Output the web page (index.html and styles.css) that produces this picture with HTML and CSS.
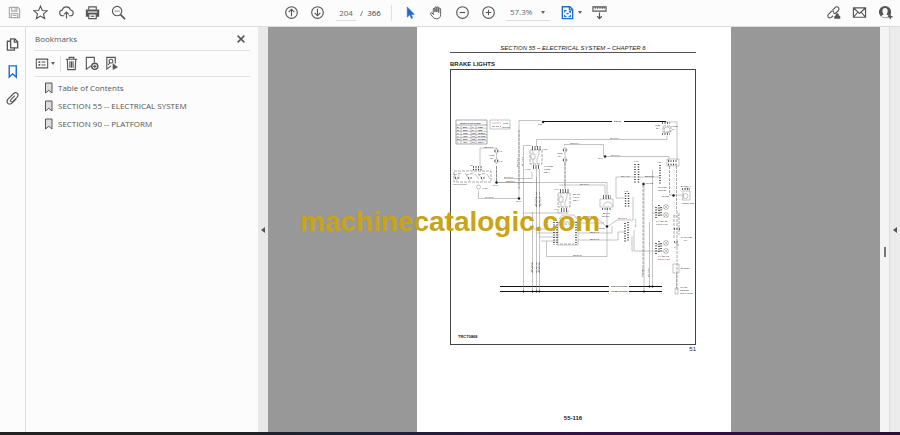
FILE: index.html
```
<!DOCTYPE html>
<html lang="en">
<head>
  <meta charset="UTF-8">
  <meta name="viewport" content="width=device-width, initial-scale=1.0">
  <title>Bookmarks</title>
  <link rel="stylesheet" href="styles.css">
</head>
<body>

  <header class="toolbar">
    <div class="tools">
      <button class="tool faded" aria-label="Save"><svg viewBox="0 0 16 16"><path d="M2.500 2.500h9l2 2v9h-11zM5 2.500v4h5.500v-4M8.500 3.500v2M4.500 13.500v-4.500h7v4.500M6 11h4"/></svg></button>
      <button class="tool" aria-label="Star"><svg viewBox="0 0 16 16"><path d="M8 1.200l2 4.600 5 .4-3.800 3.300 1.200 4.900L8 11.800l-4.400 2.600 1.200-4.900L1 6.200l5-.4z"/></svg></button>
      <button class="tool" aria-label="Upload"><svg viewBox="0 0 16 16"><path d="M5.500 11.500H4a3 3 0 0 1-.5-6 4.500 4.500 0 0 1 8.700-.2A3.100 3.100 0 0 1 12 11.500h-1.500M8 14.500V7.500M5.500 10L8 7.500l2.500 2.500"/></svg></button>
      <button class="tool" aria-label="Print"><svg viewBox="0 0 16 16"><path d="M4 5V2h8v3"/><path class="solid" d="M1.500 5.500h13v6.500h-13z"/><path class="paper" d="M4 9.500h8v5H4z"/><path d="M6 12h4"/><path class="light" d="M3 7.500h10"/></svg></button>
      <button class="tool" aria-label="Search"><svg viewBox="0 0 16 16"><circle cx="6.500" cy="6.500" r="5"/><path d="M10.200 10.200l4.800 4.800" stroke-width="1.800"/><path d="M4 6.500h1M6 6.500h1M8 6.500h1"/></svg></button>
    </div>

    <div class="tools page-tools">
      <button class="tool" aria-label="Previous page"><svg viewBox="0 0 16 16"><circle cx="8" cy="8" r="6.200"/><path d="M8 12V4.500M5 7.500l3-3 3 3"/></svg></button>
      <button class="tool" aria-label="Next page"><svg viewBox="0 0 16 16"><circle cx="8" cy="8" r="6.200"/><path d="M8 4v7.500M5 8.500l3 3 3-3"/></svg></button>
      <input class="page-number" type="text" value="204" aria-label="Page number">
      <span class="page-total">/&nbsp; 366</span>
      <span class="divider"></span>
      <button class="tool blue" aria-label="Select"><svg viewBox="0 0 16 16"><path class="solid" d="M4.500 2v11l2.700-2.500 1.800 4 1.500-.7-1.800-3.800h3.500z" stroke-width=".5"/></svg></button>
      <button class="tool" aria-label="Pan"><svg viewBox="0 0 16 16"><path d="M4.500 9.500V4q.9-1.200 1.900 0V7.500 2.500q1-1.200 2 0V7.500 2.500q1-1.200 2 0V8 4q1-1.200 2 0V10q0 4.700-4.500 4.700-2.500 0-4-2L1.300 9q.8-1.500 2-.5l1.500 1.700z" stroke-width="1"/></svg></button>
      <button class="tool" aria-label="Zoom out"><svg viewBox="0 0 16 16"><circle cx="8" cy="8" r="6.200"/><path d="M5 8h6"/></svg></button>
      <button class="tool" aria-label="Zoom in"><svg viewBox="0 0 16 16"><circle cx="8" cy="8" r="6.200"/><path d="M5 8h6M8 5v6"/></svg></button>
      <label class="zoom">
        <select aria-label="Zoom level"><option>57.3%</option></select>
        <span class="caret"></span>
      </label>
      <button class="tool blue fit" aria-label="Fit page"><svg viewBox="0 0 16 16"><path d="M2.500 1.800h8l3 3v9.700h-11z" stroke-width="1.500"/><path d="M10 2v3.200h3M5 8V6h2M9.500 7H11v1.500M5 10.500v2h2M9 12.500h2v-2M6.800 9.200h2.400"/></svg><span class="caret"></span></button>
      <button class="tool" aria-label="Scroll mode"><svg viewBox="0 0 16 16"><path d="M1 2h14v4.500H1zM3.500 2v2M6 2v2M8.500 2v2M11 2v2M13 2v2"/><path d="M8 8v6.500M5.500 12L8 14.500l2.500-2.500"/></svg></button>
    </div>

    <div class="tools">
      <button class="tool" aria-label="Share link"><svg viewBox="0 0 16 16"><path d="M7 5.500l3-3q2-1.300 3.300.2t0 3.200L10.500 8.500q-1.600 1-2.800-.3M8.500 7q-1.500-1.200-3 0L2.500 10q-1.300 1.600 0 3t3.200.2L7.500 11.500"/><path class="solid" d="M9 14.300v-1.500q.2-1.300 1.600-1.600-.4-2.200 1.400-2.200t1.400 2.200q1.500.3 1.600 1.600v1.500z" stroke-width=".5"/></svg></button>
      <button class="tool" aria-label="Mail"><svg viewBox="0 0 16 16"><path d="M1.500 3h13v10h-13zM2 3.500l6 5.500 6-5.500M2 12.500l4-4.500M14 12.500l-4-4.500"/></svg></button>
      <button class="tool" aria-label="Account"><svg viewBox="0 0 16 16"><circle class="solid" cx="7.500" cy="7.500" r="5.900"/><path class="paper" stroke="none" d="M3.500 12.300q.2-1.800 2.600-2.300Q4.700 9 4.700 6.300 4.900 3.300 7.500 3.300t2.800 3q0 2.700-1.400 3.700 2.400.5 2.600 2.300-2 1.200-4 1.200t-4-1.200z"/><path d="M10.500 12.500h5M13 10v5" stroke-width="1.500"/></svg></button>
    </div>
  </header>

  <main class="workspace">
    <nav class="rail">
      <button class="tool" aria-label="Pages"><svg viewBox="0 0 16 16"><path d="M6 2h4.500l3 3v6.500H6zM10 2v3.500h3.500M6 4.500H2.500v9.500h7.500v-2.500" stroke-width="1.400"/></svg></button>
      <button class="tool blue" aria-label="Bookmarks"><svg viewBox="0 0 16 16"><path d="M4.500 2h7.500v12l-3.800-3.500L4.500 14z" stroke-width="1.500"/></svg></button>
      <button class="tool" aria-label="Attachments"><svg viewBox="0 0 16 16"><path d="M10.500 5L6.500 9q-1.200 1.500-.2 2.300t2.200-.3L13 6.500q1.800-2.300.2-4-2-1.500-4 .2L3.200 8.700q-2 2.500-.2 4.500 2.200 1.700 4.500-.2L12 8.500"/></svg></button>
    </nav>

    <section class="panel">
      <div class="panel-title">
        <h1>Bookmarks</h1>
        <button class="close" aria-label="Close"><svg viewBox="0 0 16 16"><path d="M3.500 3.500l9 9M12.500 3.500l-9 9" stroke-width="2"/></svg></button>
      </div>
      <div class="panel-tools">
        <button class="tool options" aria-label="Options"><svg viewBox="0 0 16 16"><path d="M1.500 3h13v10h-13zM7.500 6.300H12M7.500 9.700H12"/><path d="M4 6.300h2M4 9.700h2" stroke-width="2"/></svg><span class="caret"></span></button>
        <span class="divider"></span>
        <button class="tool" aria-label="Delete"><svg viewBox="0 0 16 16"><path d="M2 3.500h12M5.500 3.500v-2h5v2M3.500 3.500l.5 11h8l.5-11M6.300 5.500v7M8 5.500v7M9.700 5.500v7"/></svg></button>
        <button class="tool" aria-label="New bookmark"><svg viewBox="0 0 16 16"><path d="M7.500 10.500L2.500 14V1.500h8.500V7"/><circle cx="11.500" cy="11" r="3.300" stroke-width="1.500"/><path d="M9.700 11h3.600M11.500 9.200v3.600"/></svg></button>
        <button class="tool" aria-label="Find bookmark"><svg viewBox="0 0 16 16"><path d="M7.500 10.500L3 14V1.500h9V8"/><circle cx="7.500" cy="5.500" r="2"/><path d="M6 7.500l-1.500 2"/><path class="solid" d="M9.500 8v6.500l5-2.500z" stroke-width=".5"/></svg></button>
      </div>
      <ul class="bookmarks">
        <li><a href="#page"><svg viewBox="0 0 10 12"><path d="M1.500 1h6.500v10L4.800 8.300 1.500 11z"/></svg>Table of Contents</a></li>
        <li><a href="#page"><svg viewBox="0 0 10 12"><path d="M1.500 1h6.500v10L4.800 8.300 1.500 11z"/></svg>SECTION 55 -- ELECTRICAL SYSTEM</a></li>
        <li><a href="#page"><svg viewBox="0 0 10 12"><path d="M1.500 1h6.500v10L4.800 8.300 1.500 11z"/></svg>SECTION 90 -- PLATFORM</a></li>
      </ul>
    </section>

    <button class="splitter" aria-label="Collapse panel"><span class="arrow"></span></button>

    <div class="viewer">
      <article class="page" id="page">
        <h2>SECTION 55 – ELECTRICAL SYSTEM – CHAPTER 6</h2>
        <h3>BRAKE LIGHTS</h3>
        <figure>
          <svg class="diagram" viewBox="451 70 244 274" role="img" aria-label="Brake lights wiring diagram">
            <defs>
              <g id="fuse"><path d="M0 -8V8"/><circle cy="-5" r="2" class="blank"/><circle cy="5" r="2" class="blank"/><path class="pins" d="M-2 -5h4M-2 5h4"/></g>
              <g id="relay"><path class="dash" d="M-6 -7H6V7H-6z"/><path d="M-3 -7v4h-2v5h4v-5h-2M3 -7v4l-2 5v5M-3 2v5"/><path class="pins" d="M-4 -10h9M-4 -8h9M-3 9h7M-3 11h7"/></g>
              <g id="lamp"><path class="pins" d="M-7 -5v12M-4 -7v12M-2 -5v9"/><circle cx="3" cy="-5" r="2.500"/><circle cx="3" cy="3" r="2.500"/><path d="M1 -7l4 4M5 -7l-4 4M1 1l4 4M5 1L1 5M-7 -3H0M-7 3H0"/></g>
            </defs>

            <!-- wire colour table and legend -->
            <path class="thick" d="M456 120h31v24h-31zM456 125h31"/>
            <path d="M461 125v19M471 125v19M476 125v19M456 128.200h31M456 131.300h31M456 134.500h31M456 137.600h31M456 140.800h31M490 120h20v9h-20zM492 123h9"/>
            <path class="dash" d="M492 126.500h9"/>
            <g class="labels strong">
              <text x="460" y="123.500">WIRE COLOR CODES</text>
              <text x="457" y="127.500">B</text><text x="463" y="127.500">BLK</text><text x="472" y="127.500">P</text><text x="478" y="127.500">PINK</text>
              <text x="457" y="130.600">W</text><text x="463" y="130.600">WHT</text><text x="472" y="130.600">R</text><text x="478" y="130.600">RED</text>
              <text x="457" y="133.800">G</text><text x="463" y="133.800">GRN</text><text x="472" y="133.800">LB</text><text x="478" y="133.800">LT BLU</text>
              <text x="457" y="137">O</text><text x="463" y="137">ORG</text><text x="472" y="137">LG</text><text x="478" y="137">LT GRN</text>
              <text x="457" y="140.100">BR</text><text x="463" y="140.100">BRN</text><text x="472" y="140.100">DB</text><text x="478" y="140.100">DK BLU</text>
              <text x="457" y="143.300">Y</text><text x="463" y="143.300">YEL</text><text x="472" y="143.300">GY</text><text x="478" y="143.300">GRAY</text>
            </g>

            <!-- power and ground rails -->
            <path class="rail-line" d="M543 121.500h69M624 121.500h42M500 286.500h109M629 286.500h33M500 291.500h109M629 291.500h33"/>

            <!-- supply and left side wiring -->
            <path d="M519 198.500V120.500h22M519 198.500H478.500v-8M480 166V148h16.500v4M496.500 166v16.500h36M504 178.500h28V172M523.500 291V145.500h8M496.500 182.500H607V197M536.500 147V139.500H667v-4M564.500 146V144.500h39v11.500M605 156.500h64V162M666 122h11v38M565 162v27"/>
            <path class="dash" d="M519 130v60M565 163v25M496.500 166v16"/>
            <path class="dash" d="M454 171h37v11h-37zM454 175l8-2M466 175l8-2M478 175l8-2"/>
            <path d="M457 181l-3-7M459 175v4M470 181l-5-8M475 174l4 5M483 181l-5-8M487 174l3 5"/>
            <circle cx="478.500" cy="187" r="2"/>
            <path class="pins" d="M473 167h9M473 169.500h9M455 178h4M468 178h4M481 178h5"/>
            <use href="#fuse" x="496.500" y="156"/>
            <use href="#fuse" x="565" y="155"/>
            <use href="#relay" x="536" y="157"/>
            <use href="#relay" x="564" y="200"/>

            <!-- vertical harness drops -->
            <path d="M532.500 212v79M536.500 169v122M539.500 169v122M523 213h38M536.500 177v30"/>
            <path class="dash" d="M532.500 262v12M536.500 262v12M539.500 262v12M536.500 192v15M539.500 192v15"/>

            <!-- control module -->
            <path d="M558 222h20v23h-20zM558 213v-3M568 213v-3M558 213h10M559 219l3-4h12l3 4M546.500 241v15.500H607V228M578 233h34v-7M578 240h40v-8h7M537 233h21M539 237h19M532 229h26M578 223h26M541 241h17"/>
            <path class="pins" d="M554 222v23M557 222v23M576 222v23"/>
            <path class="dash" d="M560 224h14M560 244h14"/>

            <!-- brake switch -->
            <path d="M600 199h13v8h-13zM603 206l3-4h4l3 4M607 207v20M607 227l10-7h16V197M559 185h46v10M607 227l-10-9h-18"/>
            <path class="pins" d="M603 196h8M603 198h8M602 209h9"/>

            <!-- connectors -->
            <path class="pins" d="M635 164v20M638.500 164v20M660 165v20M625.500 193v14M628.500 193v14M625 223v20M628 222v20M668 161h10M668 164.500h10M662 123h8M662 134h8"/>
            <path d="M667 159h12v7h-12zM635 177h-19v21h8M638 177h22M644 184v107M649.500 286V222M652.500 286V170M652.500 213h8M634 230v21h25M633 251h-1v-15"/>
            <path class="dash" d="M663 126h8v6h-8zM669.500 166v29M676.500 166v45M643 185v90"/>
            <circle cx="667" cy="130" r="3"/>

            <!-- brake light and ground leg -->
            <path d="M669.500 195h7M677 195h6M683 191h7v9h-8l1-3zM685 190v-2h4v2"/>
            <circle cx="685.500" cy="196" r="2.500"/>
            <path class="dash" d="M677 211v80M674 215v24M679 213v22"/>
            <path class="pins" d="M682 189h8M674 229h6M674 242h5"/>
            <path d="M674 215q3 3 5 0M674 242l5 3-5 3M673 264h6v9h-6zM676.500 273v15M675 288h3v6h-3z"/>
            <use href="#lamp" x="663" y="212"/>
            <use href="#lamp" x="663" y="248"/>

            <g class="dots">
              <circle cx="519" cy="198.500" r="1"/><circle cx="496.500" cy="182.500" r="1"/><circle cx="605" cy="156.500" r="1"/><circle cx="643.500" cy="184" r="1"/><circle cx="607" cy="226.500" r="1"/><circle cx="673.500" cy="195.500" r="1"/><circle cx="543" cy="122" r="1"/>
              <circle cx="523.500" cy="291.500" r=".8"/><circle cx="532.500" cy="291.500" r=".8"/><circle cx="536.500" cy="291.500" r=".8"/><circle cx="539.500" cy="291.500" r=".8"/><circle cx="644" cy="291.500" r=".8"/><circle cx="649.500" cy="286.500" r=".8"/><circle cx="652.500" cy="286.500" r=".8"/>
            </g>

            <g class="labels strong">
              <text x="614" y="122.300">B BATT</text>
              <text x="611" y="287.300">CLEAN GROUND</text>
              <text x="611" y="292.300">FRAME GROUND</text>
            </g>
            <g class="labels">
              <text x="503" y="124">WIRE</text><text x="502" y="127.500">OPTION</text>
              <text x="538" y="125">S-31</text>
              <text x="484" y="147.500">982 R-1.0</text>
              <text x="489" y="156">FUSE</text><text x="490" y="159">15A</text>
              <text x="499" y="152">X-5</text><text x="499" y="162">X-5</text>
              <text x="453" y="185">LIGHT SWITCH</text>
              <text x="482" y="189">X-036</text><text x="470" y="166">C1</text>
              <text x="485" y="198">794 B-1.0</text>
              <text x="493" y="186">SP-04</text><text x="516" y="202">SP-1A</text>
              <text x="504" y="178">103 O-0.8</text><text x="506" y="182">982 B-1.0</text>
              <text x="542" y="150">X-010</text><text x="525" y="170">X-010</text>
              <text x="544" y="167">FLASHER</text><text x="544" y="170">TIMER</text><text x="544" y="173">RELAY</text>
              <text x="557" y="154">FUSE</text><text x="558" y="157">10A</text>
              <text x="570" y="144">982 R-1.0</text><text x="610" y="139">870 R-1.0</text>
              <text x="598" y="159">SP-2</text><text x="611" y="156">870 R-1.0</text>
              <text x="580" y="185">810 R-1.0</text>
              <text x="573" y="195">BRAKE</text><text x="573" y="198">LIGHT</text><text x="573" y="201">RELAY</text>
              <text x="554" y="190">X-044</text><text x="554" y="210">X-044</text>
              <text x="603" y="214">BRAKE</text><text x="602" y="217">SWITCH</text>
              <text x="583" y="217">812 R-0.8</text><text x="590" y="232.500">855 R-0.8</text><text x="590" y="239.500">856 R-0.8</text><text x="573" y="256">892 B-0.8</text>
              <text x="618" y="219">890 R-1.0</text><text x="599" y="229">SP-25</text>
              <text x="655" y="126">FUSE</text><text x="656" y="129">20A</text><text x="672" y="127">FUSE</text><text x="672" y="130">10A</text>
              <text x="634" y="162">X-19</text><text x="657" y="163">X-20</text><text x="621" y="176.500">810 Y-0.8</text><text x="645" y="176.500">815 B-0.8</text><text x="646" y="184">SPLICE</text>
              <text x="658" y="188">TRAILER</text><text x="658" y="191">SOCKET</text><text x="624" y="192">X-15</text>
              <text x="681" y="187">BK-RELAY</text><text x="681" y="204">ALTERNATOR</text><text x="662" y="197">SPLICE</text>
              <text x="656" y="222">R.H. BRAKE</text><text x="656" y="225">LIGHT LAMP</text>
              <text x="658" y="257">L.H. BRAKE</text><text x="658" y="260">LIGHT LAMP</text>
              <text x="681" y="238">MAIN FUSE</text><text x="684" y="241">60A</text><text x="681" y="269">BATTERY</text>
              <text x="680" y="288">FRAME</text><text x="680" y="291">GROUND</text><text x="680" y="294">STRAP STUD</text>
              <g transform="rotate(-90)">
                <text x="-167" y="518">888 R-1.0</text><text x="-166" y="523">894 R-0.8</text><text x="-206" y="536">871 R-1.0</text><text x="-206" y="541">832 R-1.0</text>
                <text x="-272" y="532">801 B-1.0</text><text x="-272" y="538.500">802 B-1.0</text><text x="-227" y="636">812 Y-0.8</text><text x="-277" y="643">870 B-0.8</text><text x="-277" y="649">871 B-0.8</text>
              </g>
            </g>
            <text class="drawing-number" x="458" y="338">TRCT0868</text>
          </svg>
          <figcaption>51</figcaption>
        </figure>
        <footer>55-116</footer>
      </article>
    </div>

    <div class="scrollbar"><span class="thumb"></span></div>
    <button class="side" aria-label="Expand tools"><span class="arrow"></span></button>
  </main>

  <div class="taskbar"></div>
  <div class="watermark">machinecatalogic.com</div>

</body>
</html>
```
FILE: styles.css
```
* {
  box-sizing: border-box;
}

body {
  font-family: 'Open Sans', 'Noto Sans', sans-serif;
  font-size: 8px;
  line-height: 12px;
  color: #555;
  background-color: #fcfcfc;
  display: flex;
  flex-direction: column;
  height: 100vh;
  margin: 0;
  overflow: hidden;
}

button {
  border: none;
  padding: 0;
  background: none;
  color: inherit;
  cursor: pointer;
}

svg {
  fill: none;
  stroke: currentColor;
}

.toolbar {
  display: flex;
  justify-content: space-between;
  align-items: center;
  height: 27px;
  padding: 0 2px 1px 1px;
  border-bottom: 1px solid #dcdcdc;
}

.tools {
  display: flex;
  align-items: center;
}

.page-tools {
  margin-right: 60px;
}

.tool {
  display: flex;
  justify-content: center;
  align-items: center;
  width: 26px;
  height: 26px;
}

.tool svg {
  width: 15px;
  height: 15px;
  stroke-width: 1.2;
}

.tool .solid {
  fill: currentColor;
}

.tool .paper {
  fill: #fcfcfc;
}

.tool .light {
  stroke: #fcfcfc;
}

.faded {
  color: #aaa;
}

.blue {
  color: #1c6cc9;
}

.caret {
  border: 2px solid transparent;
  border-top: 3px solid #666;
  border-bottom: none;
}

.divider {
  width: 1px;
  height: 16px;
  background-color: #e0e0e0;
}

.page-number {
  width: 20px;
  height: 16px;
  margin: 0 4px 0 6px;
  padding: 0;
  border: none;
  border-bottom: 1px solid #ddd;
  background: none;
  font: inherit;
  color: #666;
  text-align: center;
}

.page-total {
  margin-right: 10px;
  color: #444;
}

.page-total + .divider {
  margin-right: 6px;
}

.zoom {
  display: flex;
  align-items: center;
  width: 44px;
  height: 16px;
  margin: 0 5px 0 4px;
  padding: 0 5px 0 4px;
  border-bottom: 1px solid #ddd;
}

.zoom select {
  flex: 1;
  appearance: none;
  border: none;
  padding: 0;
  background: none;
  font: inherit;
  color: #666;
}

.fit {
  width: 32px;
  gap: 3px;
}

.workspace {
  display: flex;
  flex: 1;
  min-height: 0;
}

.rail {
  display: flex;
  flex-direction: column;
  width: 26px;
  padding-top: 4px;
  border-right: 1px solid #ddd;
}

.rail .tool {
  width: 24px;
  height: 27px;
}

.panel {
  width: 232px;
  padding: 0 8px 0 9px;
}

.panel-title {
  display: flex;
  justify-content: space-between;
  align-items: center;
  height: 24px;
  padding-right: 3px;
  border-bottom: 1px solid #e0e0e0;
}

.panel-title h1 {
  margin: 0;
  font-size: 8px;
  font-weight: normal;
}

.close {
  width: 12px;
  height: 12px;
}

.close svg {
  display: block;
}

.panel-tools {
  display: flex;
  align-items: center;
  height: 26px;
  border-bottom: 1px solid #e0e0e0;
}

.panel-tools .tool {
  width: 20px;
}

.panel-tools .options {
  gap: 2px;
  margin-right: 5px;
}

.options svg {
  width: 14px;
}

.bookmarks {
  list-style: none;
  margin: 0;
  padding: 2px 0 0 9px;
}

.bookmarks a {
  display: flex;
  align-items: center;
  gap: 4px;
  height: 18px;
  color: #555;
  text-decoration: none;
  white-space: nowrap;
}

.bookmarks svg {
  width: 10px;
  height: 12px;
  fill: #ddd;
}

.splitter,
.side {
  display: flex;
  justify-content: center;
  align-items: center;
  width: 10px;
  background-color: #e8e8e8;
}

.side {
  background-color: #ececec;
}

.arrow {
  border: 3px solid transparent;
  border-right: 4px solid #555;
  border-left: none;
}

.viewer {
  display: flex;
  justify-content: center;
  flex: 1;
  overflow: hidden;
  background-color: #989898;
}

.page {
  display: flex;
  flex-direction: column;
  width: 314px;
  padding: 17px 35px 10px 33px;
  background-color: #fff;
  color: #222;
  font-family: 'Liberation Sans', Arial, sans-serif;
  font-size: 6px;
  line-height: 8px;
}

.page h2 {
  margin: 0;
  border-bottom: 1px solid #555;
  font-size: 6px;
  font-style: italic;
  font-weight: normal;
  text-align: center;
}

.page h3 {
  margin: 7px 0 1px;
  font-size: 6px;
}

figure {
  margin: 0;
}

.diagram {
  display: block;
  width: 100%;
  border: 1px solid #444;
  color: #888;
  stroke-width: 0.5;
}

.diagram text {
  fill: #222;
  stroke: none;
}

.diagram .labels {
  font-size: 2px;
}

.diagram .strong {
  font-weight: bold;
}

.diagram .drawing-number {
  font-size: 4px;
  font-weight: bold;
}

.diagram .thick {
  stroke: #555;
}

.diagram .blank {
  fill: #fff;
}

.diagram .dash {
  stroke: #555;
  stroke-dasharray: 3 1;
}

.diagram .pins {
  stroke: #333;
  stroke-width: 1.5;
  stroke-dasharray: 1 1.5;
}

.diagram .rail-line {
  stroke: #111;
  stroke-width: 1;
}

.diagram .dots {
  fill: #111;
  stroke: #111;
}

figcaption {
  text-align: right;
}

.page footer {
  margin-top: auto;
  font-weight: bold;
  text-align: center;
}

.scrollbar {
  display: flex;
  justify-content: center;
  align-items: center;
  width: 10px;
  padding-top: 45px;
  border-right: 1px solid #ddd;
  background-color: #f4f4f4;
}

.thumb {
  width: 2px;
  height: 10px;
  background-color: #777;
}

.taskbar {
  height: 3px;
  background: linear-gradient(90deg, #222 25%, #1c2338 38%, #35104a 70%, #281038);
}

.watermark {
  position: absolute;
  top: 51%;
  left: 50%;
  transform: translate(-50%, -50%);
  color: #c9a416;
  font-family: 'Liberation Sans', Arial, sans-serif;
  font-size: 28px;
  font-weight: bold;
  line-height: 32px;
}
```
